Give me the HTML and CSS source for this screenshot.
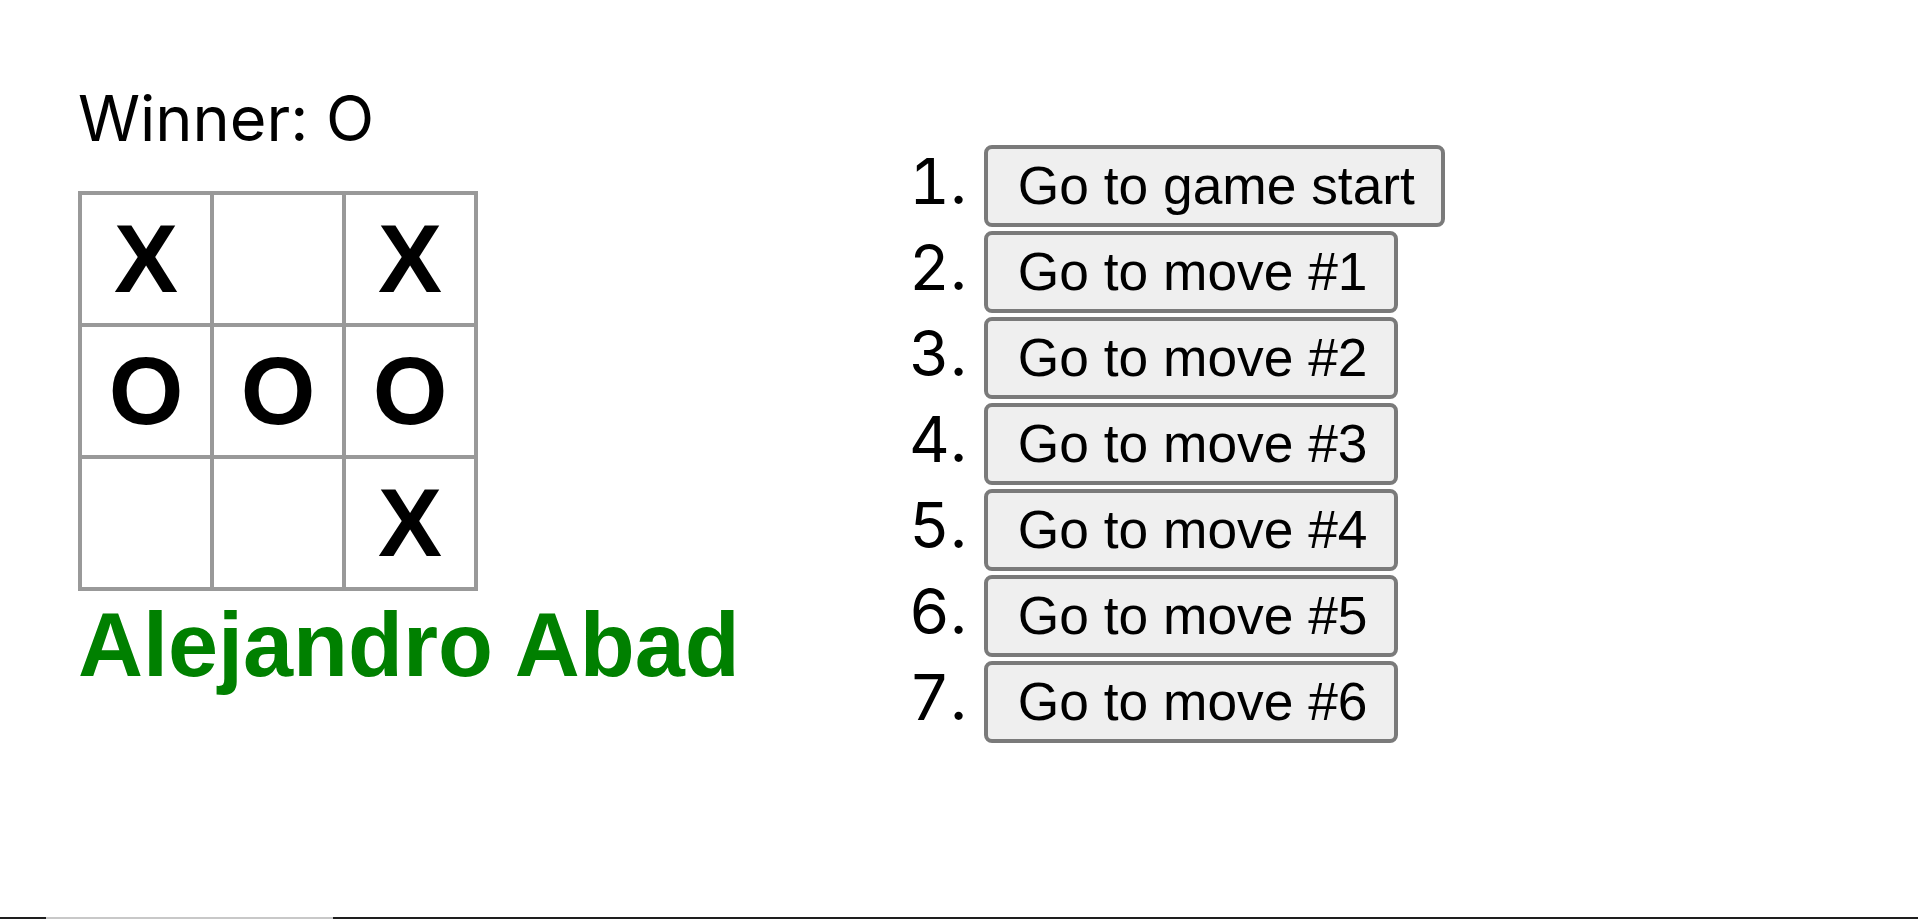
FILE: index.html
```html
<!DOCTYPE html>
<html>
<head>
<meta charset="utf-8">
<title>Tic-Tac-Toe</title>
<link rel="stylesheet" href="styles.css">
</head>
<body>
<div class="game">
  <div class="game-board">
    <div class="status">Winner: O</div>
    <div class="board-row">
      <button class="square">X</button>
      <button class="square"></button>
      <button class="square">X</button>
    </div>
    <div class="board-row">
      <button class="square">O</button>
      <button class="square">O</button>
      <button class="square">O</button>
    </div>
    <div class="board-row">
      <button class="square"></button>
      <button class="square"></button>
      <button class="square">X</button>
    </div>
    <div class="author">Alejandro Abad</div>
  </div>
  <div class="game-info">
    <ol class="moves">
      <li><button class="move-btn">Go to game start</button></li>
      <li><button class="move-btn">Go to move #1</button></li>
      <li><button class="move-btn">Go to move #2</button></li>
      <li><button class="move-btn">Go to move #3</button></li>
      <li><button class="move-btn">Go to move #4</button></li>
      <li><button class="move-btn">Go to move #5</button></li>
      <li><button class="move-btn">Go to move #6</button></li>
    </ol>
  </div>
</div>
<div class="scrollbar"><div class="scroll-thumb"></div></div>
</body>
</html>
```
FILE: styles.css
```css
* {
  box-sizing: border-box;
}

html, body {
  background: #fff;
}

body {
  margin: 80px 80px 0 78px;
  padding: 0;
  font-family: Inter, "Liberation Sans", sans-serif;
  font-size: 63px;
  color: #000;
}

.game {
  display: flex;
  flex-direction: row;
}

.game-board {
  flex: none;
}

.status {
  margin-bottom: 38px;
  line-height: 77px;
}

.board-row::after {
  clear: both;
  content: "";
  display: table;
}

.square {
  background: #fff;
  border: 4px solid #999;
  float: left;
  font-family: "Liberation Sans", Arial, sans-serif;
  font-size: 96px;
  font-weight: bold;
  line-height: 128px;
  height: 136px;
  width: 136px;
  margin-right: -4px;
  margin-top: -4px;
  padding: 0;
  text-align: center;
  color: #000;
}

.author {
  font-family: "Liberation Sans", Arial, sans-serif;
  font-weight: bold;
  font-size: 90px;
  line-height: 103px;
  color: #008000;
  margin-top: 0;
  padding-top: 3px;
}

.game-info {
  margin-left: 84px;
}

.moves {
  margin: 63px 0 0 0;
  padding-left: 160px;
}

.moves li {
  height: 86px;
  line-height: 77px;
}

.move-btn {
  font-family: "Liberation Sans", Arial, sans-serif;
  font-size: 53.33px;
  line-height: 61px;
  height: 82px;
  padding: 6px 26px 6px 30px;
  margin: 0;
  background: #efefef;
  border: 4px solid #7a7a7a;
  border-radius: 8px;
  color: #000;
  vertical-align: baseline;
}

.scrollbar {
  position: fixed;
  left: 0;
  right: 0;
  bottom: 0;
  height: 2px;
  background: #1e1e1e;
}

.scroll-thumb {
  margin-left: 46px;
  width: 287px;
  height: 2px;
  background: #c8c8c8;
}
```
